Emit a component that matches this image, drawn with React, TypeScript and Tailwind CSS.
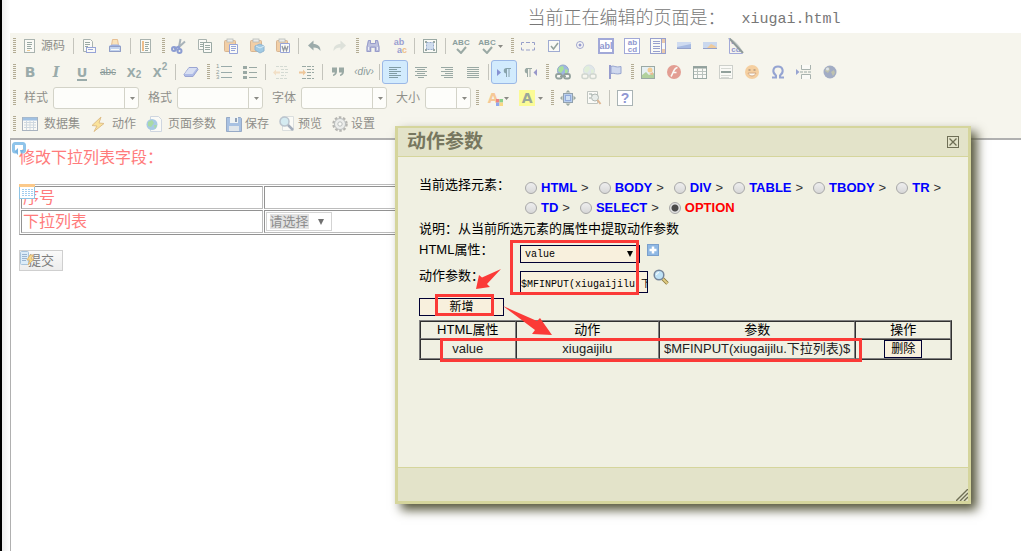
import type { ReactNode } from 'react'

// 16x16 toolbar drawings
const ICONS: Record<string, ReactNode> = {
  source: (
    <>
      <rect x="2.5" y="1.5" width="10" height="13" fill="#fff" stroke="#5f7372" />
      <path d="M5 4.5h5M5 6.5h5M5 8.5h4M5 10.5h5" stroke="#405f5e" />
      <path d="M5 12.5h3" stroke="#e8a33a" />
    </>
  ),
  newpage: (
    <>
      <path d="M2.5 1.5h7l2 2v10h-9z" fill="#fff" stroke="#5f7372" />
      <path d="M4 4.5h5M4 6.5h5M4 8.5h3" stroke="#405f5e" />
      <rect x="5.5" y="9.5" width="9" height="5" fill="#fff" stroke="#3a56c4" />
      <path d="M7 11.5h5" stroke="#3a56c4" />
    </>
  ),
  print: (
    <>
      <path d="M5.5 1.5h5l1 6h-7z" fill="#ffd28a" stroke="#d98a3c" />
      <path d="M2 8l3-1.5h6L14 8v6H2z" fill="#4a6fd6" />
      <path d="M2.5 8.5h11v5h-11z" fill="#8fb2f2" stroke="#2f4a9f" />
      <path d="M4 11.5h8" stroke="#fff" />
    </>
  ),
  template: (
    <>
      <rect x="2.5" y="1.5" width="10" height="13" fill="#fff" stroke="#5f7372" />
      <path d="M5 3v10" stroke="#e8862a" strokeWidth="2" />
      <path d="M7 4.5h4M7 6.5h4M7 8.5h3M7 10.5h4M7 12.5h3" stroke="#405f5e" />
    </>
  ),
  cut: (
    <>
      <path d="M8 9L9.5 1M8 9l6-5.5" stroke="#5d7388" strokeWidth="2" />
      <path d="M8 8.5L3 11M8 8.5L8.5 12" stroke="#2547b8" strokeWidth="2" />
      <circle cx="3" cy="11" r="2" fill="none" stroke="#2547b8" strokeWidth="2" />
      <circle cx="8.5" cy="13" r="2" fill="none" stroke="#2547b8" strokeWidth="2" />
    </>
  ),
  copy: (
    <>
      <path d="M1.5 1.5h8v10h-8z" fill="#fff" stroke="#5f7372" />
      <path d="M3 4.5h4M3 6.5h4M3 8.5h3" stroke="#405f5e" />
      <path d="M6.5 4.5h8v10h-8z" fill="#fff" stroke="#405f5e" />
      <path d="M8 7.5h5M8 9.5h5M8 11.5h5" stroke="#405f5e" />
    </>
  ),
  paste: (
    <>
      <rect x="1.5" y="2.5" width="11" height="11" rx="1" fill="#f0a860" stroke="#b9763a" />
      <rect x="4" y="1" width="6" height="3" fill="#dfe3e6" stroke="#7b8588" strokeWidth="0.8" />
      <path d="M6.5 6.5h8v9h-8z" fill="#fff" stroke="#3a56c4" />
      <path d="M8 8.5h5M8 10.5h5M8 12.5h4" stroke="#3a56c4" />
    </>
  ),
  pastetext: (
    <>
      <rect x="1.5" y="2.5" width="11" height="11" rx="1" fill="#f0a860" stroke="#b9763a" />
      <rect x="4" y="1" width="6" height="3" fill="#dfe3e6" stroke="#7b8588" strokeWidth="0.8" />
      <path d="M6 8l5-2 4 2v5l-4 2-5-3z" fill="#4da0dc" stroke="#2f77b5" />
      <path d="M7 8l4 2 4-2" stroke="#bfe3ff" fill="none" />
    </>
  ),
  pasteword: (
    <>
      <rect x="1.5" y="2.5" width="11" height="11" rx="1" fill="#f0a860" stroke="#b9763a" />
      <rect x="4" y="1" width="6" height="3" fill="#dfe3e6" stroke="#7b8588" strokeWidth="0.8" />
      <path d="M5.5 5.5h9v9h-9z" fill="#fff" stroke="#3a56c4" />
      <path d="M7 8l1.5 4.5L10 8.5l1.5 4L13 8" fill="none" stroke="#333f55" strokeWidth="1.3" />
    </>
  ),
  undo: <path d="M2 7.5L7.5 2.5v3.500c4 0 7 2 7 7C13 10.5 10.5 9.5 7.5 9.5V12.5z" fill="#45646a" />,
  redo: <path d="M14 7.5L8.5 2.5v3.500c-4 0-7 2-7 7C3 10.5 5.5 9.5 8.5 9.5V12.5z" fill="#c5cec8" />,
  find: (
    <>
      <path d="M3 2h3v3h4V2h3l1.5 7v5h-5v-4h-3v4h-5V9z" fill="#8790d2" />
      <path d="M3.5 2.5h2v3h5v-3h2L14 9v4.5h-3.5V9h-5v4.5H2V9z" fill="none" stroke="#3c46a8" />
      <path d="M3.5 9v3M12.5 9v3" stroke="#dfe4ff" />
    </>
  ),
  select: (
    <>
      <rect x="1.5" y="1.5" width="13" height="13" fill="#fff" stroke="#405f5e" />
      <rect x="4.5" y="4.5" width="7" height="7" fill="#aac5ee" stroke="#3a62b0" strokeDasharray="2 1" />
      <path d="M3 3h2v2H3zM11 3h2v2h-2zM3 11h2v2H3zM11 11h2v2h-2z" fill="#405f5e" />
    </>
  ),
  eraser: (
    <>
      <path d="M6 3.5h8l1 2-5 7H2l-1-2z" fill="#6a84e2" stroke="#4358b8" />
      <path d="M6 4h8L9.5 10h-8z" fill="#bccaf8" />
    </>
  ),
  bullets: (
    <>
      <path d="M1 2h4v3H1zM1 7h4v3H1zM1 12h4v3H1z" fill="#405f5e" />
      <path d="M7 3.5h8M7 8.5h8M7 13.5h8" stroke="#405f5e" />
    </>
  ),
  outdent: (
    <>
      <path d="M3 2.5h12M8 5.5h7M8 8.5h7M8 11.5h5M3 14.5h12" stroke="#b3c0bb" strokeDasharray="3 1" />
      <path d="M0 8.5l3-3v2h4v2H3v2z" fill="#f0cba0" />
    </>
  ),
  indent: (
    <>
      <path d="M3 2.5h12M8 5.5h7M8 8.5h7M8 11.5h5M3 14.5h12" stroke="#405f5e" strokeDasharray="4 1" />
      <path d="M7 8.5l-3-3v2H0v2h4v2z" fill="#e89a4a" />
    </>
  ),
  quote: (
    <path d="M2 3.5h5v4c0 2.500-1.500 4-4 4.500V10.500c1.300-.4 1.800-1 1.800-2H2zM9 3.500h5v4c0 2.500-1.500 4-4 4.500V10.500c1.300-.4 1.800-1 1.800-2H9z" fill="#405f5e" />
  ),
  left: <path d="M2 3.5h12M2 5.5h8M2 7.5h12M2 9.5h8M2 11.5h12M2 13.5h9" stroke="#304f4e" />,
  center: <path d="M2 3.5h12M4 5.5h8M2 7.5h12M4 9.5h8M2 11.5h12M5 13.5h6" stroke="#405f5e" />,
  right: <path d="M2 3.5h12M6 5.5h8M2 7.5h12M6 9.5h8M2 11.5h12M5 13.5h9" stroke="#405f5e" />,
  justify: <path d="M2 3.5h12M2 5.5h12M2 7.5h12M2 9.5h12M2 11.5h12M2 13.5h12" stroke="#405f5e" />,
  ltr: (
    <>
      <path d="M1 5l4 3.5L1 12z" fill="#3c3ca8" />
      <path d="M10 4.5h5M10.5 4v9M13 4v9" stroke="#405f5e" fill="none" />
      <path d="M10.5 4v5.5a2.700 2.700 0 010-5.500z" fill="#405f5e" />
    </>
  ),
  rtl: (
    <>
      <path d="M15 5l-3.5 3.5L15 12z" fill="#3c3ca8" />
      <path d="M4 4.5h6M5.5 4v9M8 4v9" stroke="#405f5e" fill="none" />
      <path d="M5.5 4v5.5a2.700 2.700 0 010-5.500z" fill="#405f5e" />
    </>
  ),
  link: (
    <>
      <circle cx="8" cy="6.5" r="5.5" fill="#4a78d6" stroke="#3260a8" />
      <path d="M4 3l4-1 1 3-3 4-3-2zM10 5l3 1-1 4-2-1z" fill="#5ccf4c" />
      <rect x="1" y="10" width="6" height="4.5" rx="2" fill="#fff" stroke="#304f4e" strokeWidth="1.8" />
      <rect x="9" y="10" width="6" height="4.5" rx="2" fill="#fff" stroke="#304f4e" strokeWidth="1.8" />
      <path d="M5 12.3h6" stroke="#304f4e" strokeWidth="1.5" />
    </>
  ),
  unlink: (
    <g opacity="0.4">
      <circle cx="8" cy="6.5" r="5.5" fill="#8fb0dc" stroke="#5f8ab8" />
      <path d="M4 3l4-1 1 3-3 4-3-2zM10 5l3 1-1 4-2-1z" fill="#8fd890" />
      <rect x="1" y="10" width="6" height="4.5" rx="2" fill="#fff" stroke="#405f5e" strokeWidth="1.5" />
      <rect x="9" y="10" width="6" height="4.5" rx="2" fill="#fff" stroke="#405f5e" strokeWidth="1.5" />
    </g>
  ),
  flag: (
    <>
      <path d="M3 1v14" stroke="#3a46b0" strokeWidth="2" />
      <path d="M4 2.5c3-1.500 4 1.500 10 0v7c-5 1.500-7-1-10 0z" fill="#a9bdf0" stroke="#3a56b4" />
    </>
  ),
  image: (
    <>
      <rect x="1.5" y="2.5" width="13" height="12" fill="#d8ecfa" stroke="#405f5e" />
      <path d="M2 11l4-3 3 3 5-2v5H2z" fill="#6fae50" />
      <circle cx="10" cy="6" r="2.5" fill="#f2a640" />
      <path d="M9 10l4-2v3z" fill="#e87f3c" />
    </>
  ),
  flash: (
    <>
      <circle cx="8" cy="8" r="7" fill="#d24a3c" />
      <path d="M11.5 3.5C7.500 4 7.500 9 5 12.500M6.500 8.500h4" fill="none" stroke="#fff" strokeWidth="1.6" />
    </>
  ),
  table: (
    <>
      <rect x="1.5" y="2.5" width="13" height="12" fill="#fff" stroke="#405f5e" />
      <path d="M1 3.5h14" stroke="#304f4e" strokeWidth="2" />
      <path d="M2 7.5h12M2 10.5h12M5.5 4v10M10.5 4v10" stroke="#7f9291" />
    </>
  ),
  hr: (
    <>
      <rect x="1.5" y="1.5" width="13" height="13" fill="#fff" stroke="#a5adab" />
      <path d="M3 4.5h10M3 11.5h10M3 13.5h8" stroke="#b7bfbd" />
      <path d="M3 8h10" stroke="#304f4e" strokeWidth="2" />
    </>
  ),
  smiley: (
    <>
      <circle cx="8" cy="8" r="7" fill="#f5ab55" />
      <path d="M4.5 6h2M9.5 6h2" stroke="#6d3f14" strokeWidth="1.5" />
      <path d="M4 9c1.500 4 6.500 4 8 0z" fill="#fff" stroke="#b5601e" />
    </>
  ),
  omega: (
    <path d="M2 13.5h4v-2C1.500 8 3 2.500 8 2.500s6.500 5.500 2 9v2h4" fill="none" stroke="#3655b8" strokeWidth="2" />
  ),
  pagebreak: (
    <>
      <path d="M5.5 1v4.5h9V1M5.5 15v-4.5h9V15" fill="#fff" stroke="#5f7372" />
      <path d="M4 8h11" stroke="#405f5e" strokeDasharray="3 1" />
      <path d="M0 5l3.5 3L0 11z" fill="#3c56b8" />
    </>
  ),
  globe: (
    <>
      <circle cx="8" cy="8" r="6.5" fill="#50659c" />
      <path d="M4 4l3-1 1 3-2 3-3-2zM9 8l3-2 1 3-2 3z" fill="#8a9170" />
      <circle cx="5.5" cy="5" r="1.5" fill="#c5d3ee" />
    </>
  ),
  form: <path d="M1.5 7V4.5H4M6 4.5h4M12 4.5h2.5V7M14.5 9.500v2.500H12M10 12H6M4 12H1.500V9.500" stroke="#3c4ea8" />,
  checkbox: (
    <>
      <rect x="2.5" y="2.5" width="11" height="11" fill="#fff" stroke="#4a64b8" />
      <path d="M5 8l2.5 3L12 5" fill="none" stroke="#304f4e" strokeWidth="1.5" />
    </>
  ),
  radio: (
    <>
      <circle cx="8" cy="7" r="3.5" fill="#fff" stroke="#4a56b0" />
      <circle cx="8" cy="7" r="1.5" fill="#3c46b0" />
    </>
  ),
  list: (
    <>
      <rect x="0.5" y="0.5" width="15" height="15" fill="#fff" stroke="#3c4eb0" />
      <path d="M11.5 1v14" stroke="#3c4eb0" />
      <path d="M3 3.5h7M3 5.5h7M3 8.5h7M3 10.5h7M3 13.5h7" stroke="#3c4eb0" />
      <path d="M12 1h3v4h-3zM12 11h3v4h-3z" fill="#e0a070" />
    </>
  ),
  button: (
    <>
      <rect x="1" y="4" width="14" height="7" fill="#5a80d8" />
      <path d="M1 4h14v2L1 9z" fill="#a9c2f4" />
      <path d="M1 10.5h14" stroke="#3450a8" />
    </>
  ),
  imagebutton: (
    <>
      <rect x="1" y="4" width="14" height="7" fill="#9fbdf0" />
      <path d="M5 10l4-4 4 2 2 2z" fill="#e8a04c" />
      <path d="M1 10.5h14" stroke="#3450a8" />
    </>
  ),
  maximize: (
    <>
      <rect x="3.5" y="3.5" width="9" height="9" fill="#7aa9f0" stroke="#304f6e" />
      <rect x="5.5" y="5.5" width="5" height="5" stroke="#2f62c8" fill="#a9ccfa" />
      <path d="M8 0l2.5 2.5h-5zM8 16l2.5-2.500h-5zM0 8l2.500-2.500v5zM16 8l-2.500-2.500v5z" fill="#405f5e" />
    </>
  ),
  preview: (
    <>
      <path d="M1.5 1.5h10v12h-10z" fill="#fff" stroke="#8b9795" />
      <path d="M3 4h3v2M3 8h2" stroke="#405f5e" fill="none" />
      <circle cx="9" cy="7.5" r="3.5" fill="#dbe6e8" stroke="#6d7d7c" />
      <path d="M11.5 10l3 4" stroke="#c9793c" strokeWidth="2" />
    </>
  ),
  dataset: (
    <>
      <rect x="0.5" y="1.5" width="15" height="13" fill="#fff" stroke="#5f7392" />
      <path d="M1 3h14" stroke="#4f8fd8" strokeWidth="3" />
      <path d="M2 6.5h12M2 9h12M2 11.5h12M4.5 5v9M8 5v9M11.5 5v9" stroke="#a9bdd4" />
    </>
  ),
  bolt: <path d="M11 1L2 9.5l5 .5-3 5.5L14 7.500 9 7z" fill="#ffd04a" stroke="#c98a2a" />,
  world: (
    <>
      <path d="M4.5 0.5h8l3 3v12h-11z" fill="#fff" stroke="#a9b9d4" />
      <circle cx="6" cy="8.5" r="5.5" fill="#5aa0dc" />
      <path d="M2 6l4-2 2 3-3 4-3-1zM8 9l3 0-2 4z" fill="#5fc060" />
    </>
  ),
  save: (
    <>
      <path d="M0.5 1.5h14l1 1v13h-15z" fill="#5d8fd8" stroke="#3a62a0" />
      <rect x="4" y="1" width="8" height="6" fill="#eef4fb" />
      <rect x="9" y="2" width="2" height="4" fill="#304f7e" />
      <rect x="3" y="10" width="10" height="5" fill="#cbd8ea" />
    </>
  ),
  magnify: (
    <>
      <path d="M3.5 0.5h11v14h-11z" fill="#fff" stroke="#c0c8d0" />
      <circle cx="5.5" cy="5.5" r="4.5" fill="#b5e3f5" stroke="#8095b0" strokeWidth="1.5" />
      <path d="M9 9l5 5" stroke="#54698c" strokeWidth="2.5" />
    </>
  ),
  gear: (
    <>
      <circle cx="8" cy="8" r="6.5" fill="none" stroke="#777" strokeWidth="2.5" strokeDasharray="2.5 1.6" />
      <circle cx="8" cy="8" r="5.5" fill="#e4e7ea" stroke="#808890" />
      <circle cx="8" cy="8" r="2.2" fill="#fff" stroke="#808890" />
    </>
  ),
  check: <path d="M4 11l4 4 5-6" fill="none" stroke="#405f5e" strokeWidth="2" />,
}

function Icon({ name }: { name: string }) {
  return (
    <svg viewBox="0 0 16 16" className="h-4 w-4 shrink-0 opacity-50" fill="none" aria-hidden="true">
      {ICONS[name]}
    </svg>
  )
}

// icons that are made of letters
function Glyph({ name }: { name: string }) {
  const base = 'relative flex h-4 w-4 items-center justify-center leading-none'
  switch (name) {
    case 'bold':
      return <span className={`${base} font-['DejaVu_Sans'] text-[14px] font-bold text-[#9aabaa]`}>B</span>
    case 'italic':
      return <span className={`${base} font-['DejaVu_Serif'] text-[14px] font-bold italic text-[#9aabaa]`}>I</span>
    case 'underline':
      return (
        <span className={`${base} font-['DejaVu_Sans'] text-[13px] font-bold text-[#9aabaa]`}>
          U<span className="absolute inset-x-[3px] -bottom-px h-0.5 bg-[#9aabaa]" />
        </span>
      )
    case 'strike':
      return <span className={`${base} text-[10px] text-[#8a9a99] line-through`}>abc</span>
    case 'sub':
      return <span className={`${base} text-[16px] font-bold text-[#9aabaa]`}>x<sub className="text-[10px]">2</sub></span>
    case 'sup':
      return <span className={`${base} text-[16px] font-bold text-[#9aabaa]`}>x<sup className="text-[10px]">2</sup></span>
    case 'div':
      return <span className={`${base} text-[10px] italic text-[#8a9a99]`}>‹div›</span>
    case 'numbers':
      return (
        <span className="flex h-4 w-4 flex-col justify-between text-[6px] leading-[5px] text-[#8a9a99]">
          {[1, 2, 3].map(n => (
            <span key={n} className="flex items-center gap-[2px]">{n}<span className="h-px flex-1 bg-[#9aabaa]" /></span>
          ))}
        </span>
      )
    case 'replace':
      return (
        <span className="flex h-4 w-4 flex-col text-[9px] leading-[8px] font-bold text-[#9a9fd2]">
          <span>ab</span><span className="text-right">a<span className="text-[#f0c08a]">c</span></span>
        </span>
      )
    case 'spell':
      return (
        <span className="relative flex h-4 w-4 justify-center text-[8px] leading-[9px] font-bold text-[#8a9e9d]">
          ABC
          <span className="absolute inset-0"><Icon name="check" /></span>
        </span>
      )
    case 'textfield':
      return <span className={`${base} border-2 border-[#a2a9d8] bg-white text-[9px] font-bold text-[#8f97cf]`}>abl</span>
    case 'textarea':
      return (
        <span className="flex h-4 w-4 flex-col border border-[#a2a9d8] bg-white pl-px text-[8px] leading-[7px] font-bold text-[#8f97cf]">
          <span>ab</span><span>cd</span>
        </span>
      )
    case 'hidden':
      return (
        <span className="relative flex h-4 w-4 flex-col text-[8px] leading-[8px] font-bold text-[#8f97cf]">
          <span>ab</span><span>cd</span>
          <svg viewBox="0 0 16 16" className="absolute inset-0 h-4 w-4" fill="none">
            <path d="M1 0l14 14V0z" fill="#f6f5ed" />
            <path d="M3 1c5 2 8 6 12 13L1 0z" fill="#c9cfcc" />
            <path d="M1 0l14 15" stroke="#8f9a99" strokeWidth="2" />
            <path d="M1.5 0v15.500h13" stroke="#a2a9d8" />
          </svg>
        </span>
      )
    case 'textcolor':
      return (
        <span className={`${base} font-['DejaVu_Sans'] text-[14px] font-bold text-[#f6c896]`}>
          A
          <svg viewBox="0 0 6 6" className="absolute -right-0.5 bottom-0 h-[7px] w-[7px]">
            <path d="M0 0h3v3H0z" fill="#ef8484" /><path d="M3 0h3v3H3z" fill="#8cd08c" />
            <path d="M0 3h3v3H0z" fill="#8ea8ef" /><path d="M3 3h3v3H3z" fill="#f8d884" />
          </svg>
        </span>
      )
    case 'bgcolor':
      return <span className={`${base} bg-[#fbfb96] font-['DejaVu_Sans'] text-[14px] font-bold text-[#9aa79a]`}>A</span>
    case 'help':
      return <span className={`${base} border border-[#a9b3b4] bg-white text-[14px] font-bold text-[#8f97d2]`}>?</span>
    default:
      return <Icon name={name} />
  }
}

const Handle = () => (
  <svg viewBox="0 0 7 16" className="h-4 w-[7px] shrink-0" aria-hidden="true">
    <path d="M4.5 0v16" stroke="#b3ac94" strokeWidth="3" strokeDasharray="1 1" />
  </svg>
)

const Separator = () => (
  <span className="flex w-[5px] shrink-0 justify-center"><span className="h-4 w-px bg-[#c4c4bc]" /></span>
)

const Caret = () => <svg viewBox="0 0 5 3" className="h-[3px] w-[5px]"><path d="M0 0h5L2.5 3z" fill="#8a8a84" /></svg>

// '|' is a separator, ':' a group handle, '+' after a name adds a menu arrow, '*' marks an active button
function Tools({ items }: { items: string }) {
  return items.split(' ').map((item, i) => {
    if (item === '|') return <Separator key={i} />
    if (item === ':') return <Handle key={i} />
    const name = item.replace(/[+*]/, '')
    if (item.endsWith('+')) {
      return (
        <button key={i} type="button" aria-label={name} className="flex h-6 w-[34px] shrink-0 items-center justify-center gap-[3px]">
          <Glyph name={name} /><Caret />
        </button>
      )
    }
    return (
      <button
        key={i}
        type="button"
        aria-label={name}
        className={
          item.endsWith('*')
            ? 'flex h-6 w-[26px] shrink-0 items-center justify-center rounded-[3px] border border-[#9bb8e6] bg-[#d2ebfd]'
            : 'flex h-6 w-[26px] shrink-0 items-center justify-center'
        }
      >
        <Glyph name={name} />
      </button>
    )
  })
}

const COMBOS = [
  { id: 'style', label: '样式', wide: true },
  { id: 'format', label: '格式', wide: true },
  { id: 'font', label: '字体', wide: true },
  { id: 'size', label: '大小', wide: false },
]

const ACTIONS = [
  { icon: 'dataset', label: '数据集', gap: 'gap-1.5' },
  { icon: 'bolt', label: '动作', gap: 'gap-1.5' },
  { icon: 'world', label: '页面参数', gap: 'gap-1.5' },
  { icon: 'save', label: '保存', gap: 'gap-[3px]' },
  { icon: 'magnify', label: '预览', gap: 'gap-[3px]' },
  { icon: 'gear', label: '设置', gap: 'gap-[3px]' },
]

function Toolbar() {
  const row = 'flex h-[26px] items-center'
  return (
    <div className="bg-[#f6f5ed] pb-px text-[12px] text-[#8f8f8a]">
      <div className={row}>
        <Handle />
        <button type="button" className="flex h-6 shrink-0 items-center gap-[3px] pr-1.5 pl-[5px]">
          <Icon name="source" />源码
        </button>
        <Tools items="| newpage print | template : cut copy paste pastetext pasteword | undo redo : find replace | select | spell spell+ : form checkbox radio textfield textarea list button imagebutton hidden" />
      </div>
      <div className={row}>
        <Tools items=": bold italic underline strike sub sup | eraser : numbers bullets | outdent indent | quote div | left* center right justify | ltr* rtl : link unlink flag : image flash table hr smiley omega pagebreak globe" />
      </div>
      <div className={row}>
        <Handle />
        {COMBOS.map(c => (
          <div key={c.id} className="flex shrink-0 items-center gap-[5px] pr-[2px] pl-[7px]">
            <label htmlFor={c.id}>{c.label}</label>
            <div className="relative">
              <select
                id={c.id}
                className={`block h-[22px] appearance-none rounded-[3px] border border-[#d3d3c8] bg-[#fdfdfa] px-1 ${c.wide ? 'w-[86px]' : 'w-[46px]'}`}
              >
                <option value=""></option>
              </select>
              <span className="pointer-events-none absolute inset-y-0 right-0 flex w-[15px] items-center justify-center border-l border-[#d3d3c8]">
                <Caret />
              </span>
            </div>
          </div>
        ))}
        <Tools items=": textcolor+ bgcolor+ : maximize preview | help" />
      </div>
      <div className={row}>
        <Handle />
        {ACTIONS.map(a => (
          <button key={a.icon} type="button" className={`flex h-6 shrink-0 items-center px-[5px] ${a.gap}`}>
            <Icon name={a.icon} />{a.label}
          </button>
        ))}
      </div>
    </div>
  )
}

function EditorArea() {
  const cell = 'h-[23px] border border-t-[#929292] border-l-[#929292] border-r-[#bcbcbc] border-b-[#bcbcbc] px-px py-0 leading-[20px]'
  return (
    <div className="flex-1 border-t-2 border-l border-[#b0b0b0] pt-1.5 pl-2 text-[16px] text-[#ff7b7b]">
      <div className="relative">
        <svg viewBox="0 0 14 14" className="absolute -top-1 -left-[7px] h-[14px] w-[14px]" fill="none">
          <path d="M4 10H3a1.500 1.500 0 01-1.500-1.500v-5.500A1.500 1.500 0 013 1.500h8A1.500 1.500 0 0112.500 3v5.500A1.500 1.500 0 0111 10h-1" stroke="#8fc4ea" strokeWidth="3" />
          <path d="M6 6v7L2.500 9.500zM8 8h4l-3 4z" fill="#79b5e2" />
        </svg>
        <p className="leading-[24px]">修改下拉列表字段：</p>
      </div>
      <div className="relative mt-[14px]">
        <svg viewBox="0 0 16 16" className="absolute top-0 left-0 h-4 w-4" fill="none">
          <rect x="0.5" y="0.5" width="15" height="14" fill="#fff" stroke="#8fc4e4" />
          <path d="M0 1.5h16" stroke="#fbc98a" strokeWidth="3" />
          <path d="M3 5.5h11M3 7.5h11M3 9.5h11M3 11.5h11" stroke="#a3cdee" strokeDasharray="2 1" />
        </svg>
        <table className="w-[488px] table-fixed border-separate border-spacing-px border border-t-[#bcbcbc] border-l-[#bcbcbc] border-r-[#929292] border-b-[#929292]">
          <tbody>
            <tr><td className={cell}>序号</td><td className={cell}></td></tr>
            <tr>
              <td className={cell}>下拉列表</td>
              <td className={cell}>
                <div className="relative w-[66px]">
                  <select aria-label="下拉列表" className="block h-[19px] w-full appearance-none border border-[#d3d3d3] bg-white text-transparent">
                    <option>请选择</option>
                  </select>
                  <span className="pointer-events-none absolute inset-y-0 left-1 flex items-center gap-[9px] text-[13px] leading-[15px] text-[#8e8e8e]">
                    <span className="bg-[#e2e2e2]">请选择</span>
                    <svg viewBox="0 0 6 6" className="h-1.5 w-1.5"><path d="M0 0h6L3 6z" fill="#707070" /></svg>
                  </span>
                </div>
              </td>
            </tr>
          </tbody>
        </table>
      </div>
      <button type="button" className="relative mt-[15px] block h-[21px] border border-[#cfcfcf] bg-gradient-to-b from-[#fafafa] to-[#ededed] px-2 text-[13px] leading-[19px] text-[#7d7d7d]">
        提交
        <svg viewBox="0 0 16 16" className="absolute top-0 left-0 h-4 w-4" fill="none">
          <rect x="0.5" y="0.5" width="8" height="13" rx="1" fill="#dcecf8" stroke="#a8c4dc" />
          <path d="M2 3.5h5M2 5.5h5M2 7.5h5M2 9.5h4" stroke="#9ab4d0" />
          <path d="M10 4l-3 5h3l-2 5 6-6h-3l2-4z" fill="#f8dc8c" stroke="#e0b878" />
        </svg>
      </button>
    </div>
  )
}

const PATH = ['HTML', 'BODY', 'DIV', 'TABLE', 'TBODY', 'TR', 'TD', 'SELECT', 'OPTION']

function ElementPath() {
  return (
    <div className="flex flex-1 flex-wrap gap-x-[10px] pt-[3px]">
      {PATH.map(tag => (
        <label key={tag} className="flex h-5 items-center gap-1 text-[13px]">
          <input
            type="radio"
            name="element"
            defaultChecked={tag === 'OPTION'}
            className="h-3 w-3 appearance-none rounded-full border border-[#a8a8a8] bg-gradient-to-b from-[#eeeeee] to-[#d8d8d8] checked:bg-[radial-gradient(circle,#4a4a4a_0_3px,#e2e2e2_4px)]"
          />
          <span className={tag === 'OPTION' ? 'font-bold text-[#ff0000]' : 'font-bold text-[#0000ff]'}>{tag}</span>
          {tag !== 'OPTION' && <span className="text-[#333]">&gt;</span>}
        </label>
      ))}
    </div>
  )
}

function Dialog() {
  const cell = 'border border-t-[#303030] border-l-[#303030] border-r-[#808080] border-b-[#808080] p-0 text-center font-normal'
  return (
    <div
      role="dialog"
      aria-labelledby="dialog-title"
      className="absolute top-[126px] left-[393px] flex w-[576px] flex-col border-[3px] border-t-2 border-[#d5d59c] bg-[#f0f0e2] text-[13px] text-black shadow-[6px_6px_10px_#55553a]"
    >
      <div className="flex h-[29px] items-center justify-between border-b border-[#d5d59c] bg-[#e3e3c9] pr-[9px] pl-[9px]">
        <h1 id="dialog-title" className="text-[19px] leading-[28px] font-bold text-[#77775f]">动作参数</h1>
        <button type="button" aria-label="关闭">
          <svg viewBox="0 0 12 12" className="h-3 w-3" fill="none">
            <rect x="0.5" y="0.5" width="11" height="11" stroke="#6f6f55" />
            <path d="M2.5 2.5l7 7M9.5 2.5l-7 7" stroke="#6f6f55" strokeWidth="1.3" />
          </svg>
        </button>
      </div>

      <div className="relative h-[310px] pt-[18px] pr-4 pl-[21px]">
        <div className="flex items-start">
          <span className="w-[106px] shrink-0 leading-[20px]">当前选择元素：</span>
          <ElementPath />
        </div>
        <p className="leading-[22px]">说明：从当前所选元素的属性中提取动作参数</p>
        <div className="flex h-[26px] items-start">
          <label htmlFor="attr" className="w-[101px] leading-[20px]">HTML属性：</label>
          <div className="relative mt-[5px] w-[120px]">
            <select id="attr" className="block h-[18px] w-full appearance-none border border-[#000033] bg-[#f8f0dd] px-1 font-['Liberation_Mono'] text-[10px]">
              <option>value</option>
            </select>
            <svg viewBox="0 0 6 6" className="pointer-events-none absolute top-1.5 right-[7px] h-1.5 w-1.5"><path d="M0 0h6L3 6z" fill="#000" /></svg>
          </div>
          <button type="button" aria-label="添加" className="mt-1 ml-[7px]">
            <svg viewBox="0 0 12 12" className="h-3 w-3" fill="none">
              <rect x="0.5" y="0.5" width="11" height="11" fill="#8fb8e4" stroke="#7ba0cc" />
              <path d="M6 2.5v7M2.5 6h7" stroke="#fff" strokeWidth="2.5" />
            </svg>
          </button>
        </div>
        <div className="flex h-8 items-start">
          <label htmlFor="param" className="w-[101px] leading-[20px]">动作参数：</label>
          <input
            id="param"
            defaultValue="$MFINPUT(xiugaijilu.下拉列表)$"
            className="mt-[5px] h-[22px] w-[128px] border border-[#000033] bg-[#f8f0dd] p-0 font-['Liberation_Mono','Noto_Sans_CJK_SC',monospace] text-[10px]"
          />
          <button type="button" aria-label="搜索" className="mt-[3px] ml-[5px]">
            <svg viewBox="0 0 16 16" className="h-4 w-4" fill="none">
              <path d="M9.5 9.5l5 5" stroke="#8a7a3c" strokeWidth="3.5" />
              <path d="M9.5 9.5l5 5" stroke="#e2cc84" strokeWidth="1.8" />
              <circle cx="6" cy="6" r="4.8" fill="#bfe2f6" stroke="#75859a" strokeWidth="1.5" />
              <path d="M3.5 6A2.500 2.500 0 016 3.500" stroke="#fff" />
            </svg>
          </button>
        </div>
        <button type="button" className="block h-[18px] w-[85px] border border-[#000033] bg-[#f8f0dd] text-[12px] leading-[16px]">新增</button>
        <table className="mt-1 w-full table-fixed border-separate border-spacing-0 border border-t-[#808080] border-l-[#808080] border-r-[#303030] border-b-[#303030] text-[#222]">
          <colgroup>
            <col className="w-[18%]" /><col className="w-[27%]" /><col className="w-[37%]" /><col className="w-[18%]" />
          </colgroup>
          <thead>
            <tr className="h-[18px] leading-[16px] text-black">
              {['HTML属性', '动作', '参数', '操作'].map(h => <th key={h} className={cell}>{h}</th>)}
            </tr>
          </thead>
          <tbody>
            <tr className="h-5 leading-[18px]">
              <td className={cell}>value</td>
              <td className={cell}>xiugaijilu</td>
              <td className={`${cell} whitespace-nowrap`}>$MFINPUT(xiugaijilu.下拉列表)$</td>
              <td className={cell}>
                <button type="button" className="mx-auto block h-[18px] w-[38px] border border-[#000033] bg-[#f8f0dd] text-[12px] leading-[16px] text-black">删除</button>
              </td>
            </tr>
          </tbody>
        </table>

        {/* red markers over the form */}
        <svg viewBox="0 0 570 310" className="pointer-events-none absolute top-0 left-0 h-[310px] w-[570px]" fill="none">
          <g stroke="#fb3a37" strokeWidth="3">
            <rect x="113.5" y="84.5" width="126" height="52" />
            <rect x="38.5" y="138.5" width="56" height="19" />
            <rect x="43.5" y="182.5" width="419" height="21" />
          </g>
          <path d="M103 112L84 120.500 81 118 78 132 92 130 89 127z" fill="#fb3a37" />
          <path d="M105 149L139 164 142 161 154 178 134 177 137 173z" fill="#fb3a37" />
        </svg>
      </div>

      <div className="flex h-[34px] items-end justify-end border-t border-[#d5d59c] bg-[#e3e3c9]">
        <svg viewBox="0 0 12 12" className="h-3 w-3" fill="none">
          <path d="M0 12L12 0M4 12l8-8M8 12l4-4" stroke="#6f6f55" strokeWidth="1.4" />
        </svg>
      </div>
    </div>
  )
}

export default function App() {
  return (
    <div className="relative flex min-h-screen overflow-hidden border-l-2 border-black bg-white font-['Liberation_Sans','Noto_Sans_CJK_SC',sans-serif]">
      <div className="w-2 shrink-0 bg-gradient-to-r from-[#eeeeee] to-white" />
      <div className="flex min-w-0 flex-1 flex-col">
        <header className="flex h-[33px] items-center justify-center gap-4 pt-[4px] pl-[337px] text-[18px] font-light whitespace-nowrap text-[#777]">
          <span>当前正在编辑的页面是：</span>
          <span className="pt-1 font-['Liberation_Mono'] text-[15px]">xiugai.html</span>
        </header>
        <Toolbar />
        <EditorArea />
      </div>
      <Dialog />
    </div>
  )
}
